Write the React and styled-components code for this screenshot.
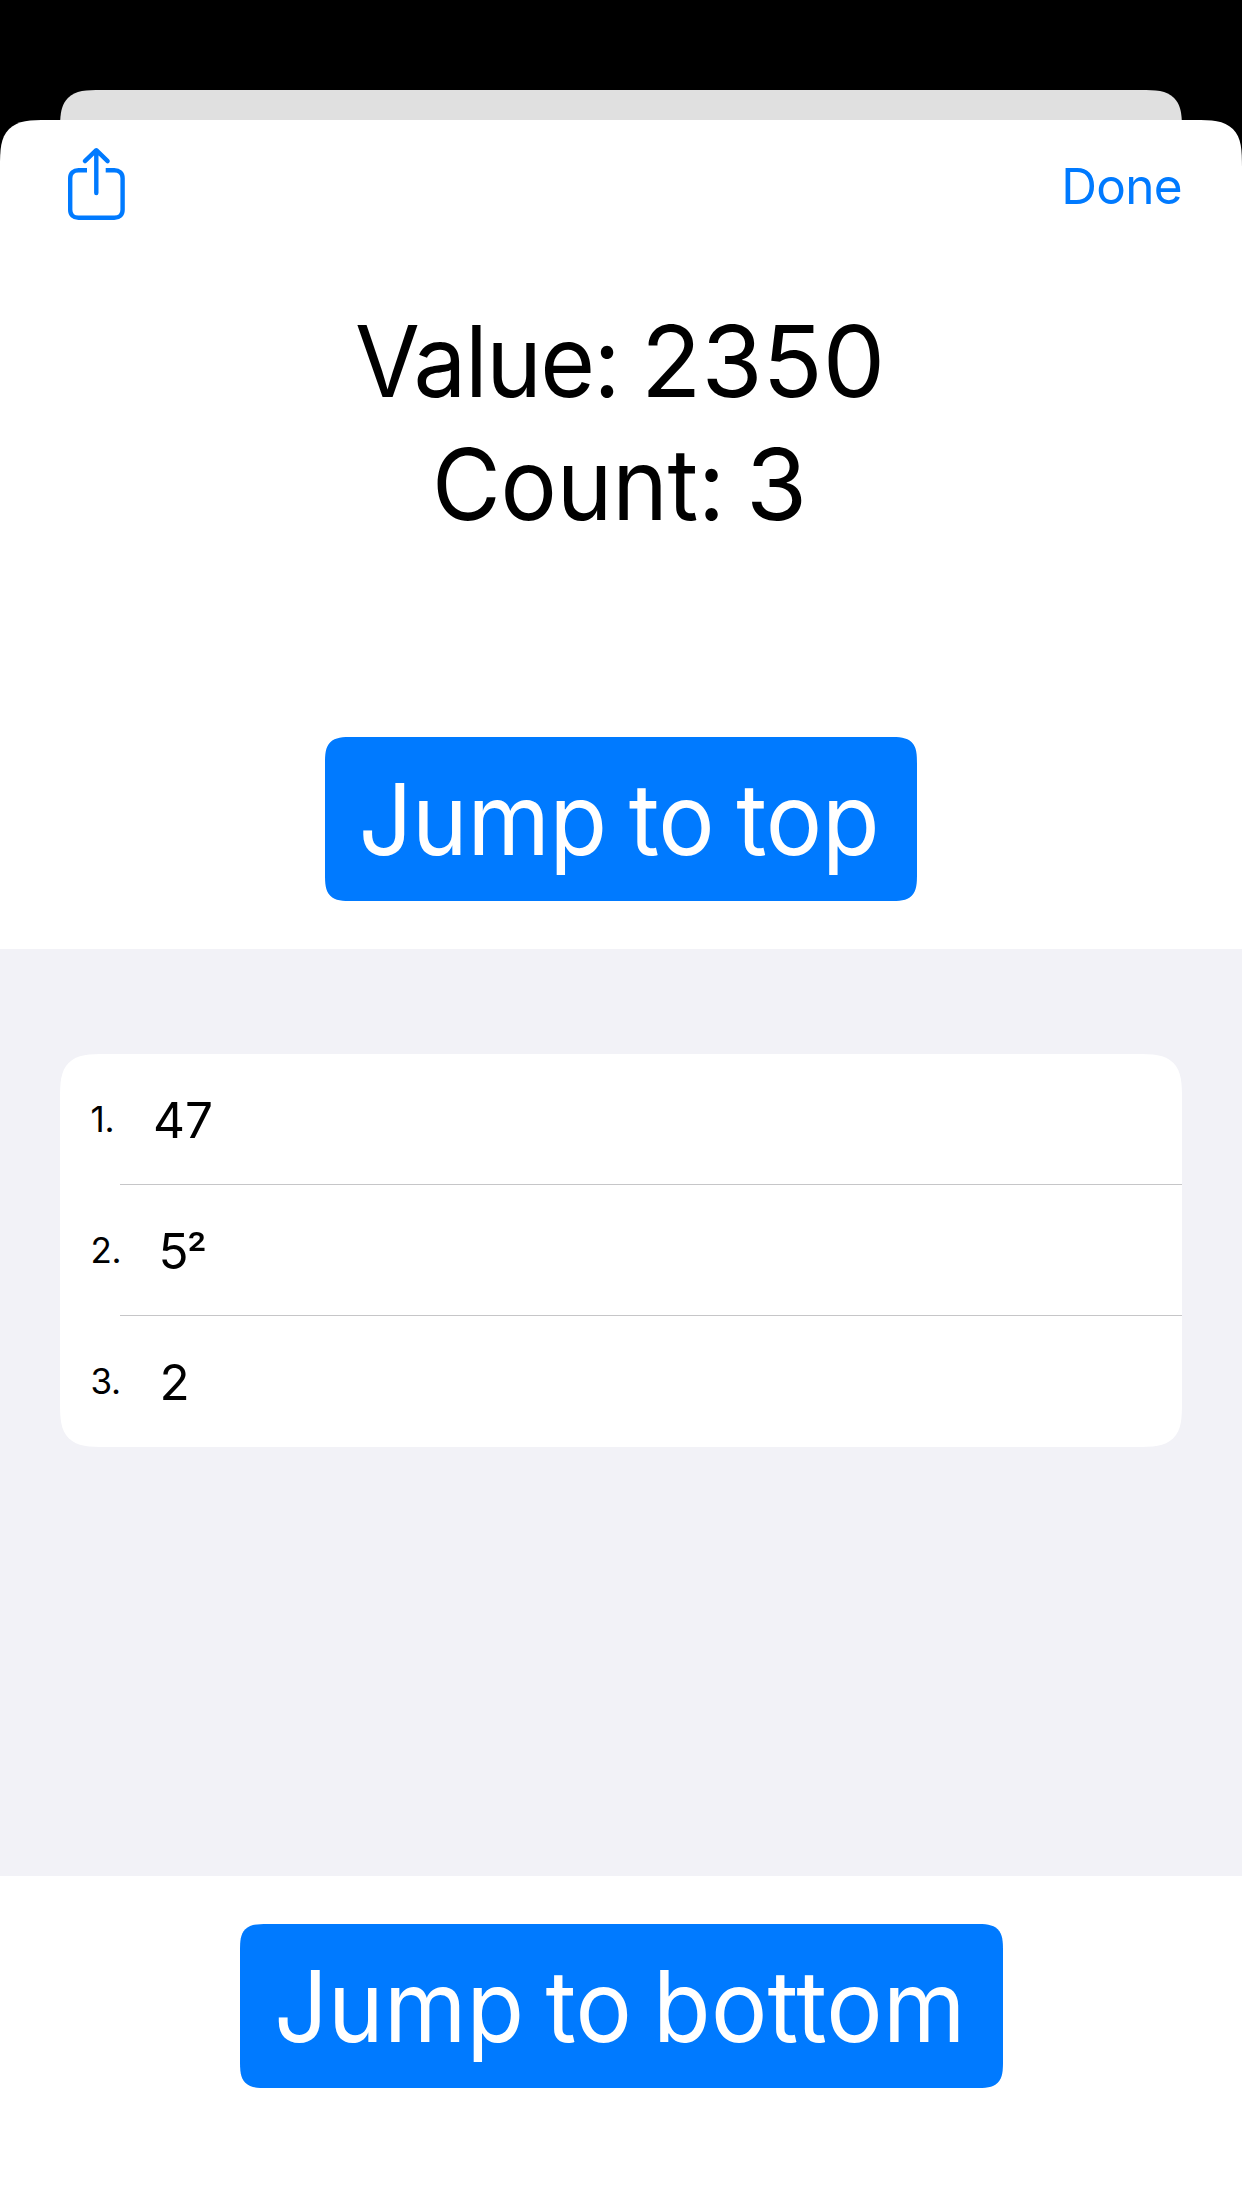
import React from "react";
import styled, { createGlobalStyle, css } from "styled-components";

const BLUE = "#007aff";

const GlobalStyle = createGlobalStyle`
  *, *::before, *::after { box-sizing: border-box; }
  body {
    margin: 0;
    background: #000;
    color: #000;
    font-family: Inter, Roboto, sans-serif;
  }
`;

const smoothCorner = (radius, sides = "all") => {
  const corners = (r) => (sides === "top" ? `${r}px ${r}px 0 0` : `${r}px`);
  return css`
    border-radius: ${corners(radius)};
    @supports (corner-shape: superellipse(1.7)) {
      border-radius: ${corners(radius * 1.528)};
      corner-shape: superellipse(1.7);
    }
  `;
};

const Screen = styled.div`
  display: flex;
  flex-direction: column;
  width: 1242px;
  height: 2208px;
  padding-top: 90px;
  overflow: hidden;
  background: #000;
`;

const SheetPeek = styled.div`
  flex: none;
  height: 30px;
  margin: 0 60px;
  overflow: hidden;

  &::before {
    content: "";
    display: block;
    height: 80px;
    background: #e0e0e0;
    ${smoothCorner(27, "top")}
  }
`;

const Sheet = styled.main`
  display: flex;
  flex: 1;
  flex-direction: column;
  background: #fff;
  ${smoothCorner(31, "top")}
`;

const Toolbar = styled.header`
  display: flex;
  align-items: center;
  justify-content: space-between;
  height: 132px;
  padding: 0 60px 0 66px;
`;

const PlainButton = styled.button`
  display: flex;
  padding: 0;
  border: 0;
  background: none;
  color: ${BLUE};
  font: 400 49.5px/60px Inter, Roboto, sans-serif;
  letter-spacing: -0.7px;
`;

const Summary = styled.section`
  display: flex;
  flex-direction: column;
  align-items: center;
  height: 437px;
  padding-top: 48px;
`;

const SummaryLine = styled.p`
  display: flex;
  width: ${(p) => p.$width}px;
  margin: 0;
  font-size: 99px;
  line-height: 123px;
  white-space: pre;
`;

const SummaryLabel = styled.span`
  flex: none;
  width: ${(p) => p.$width}px;
  letter-spacing: ${(p) => p.$tracking}px;
  transform: scaleX(0.95);
  transform-origin: left;
`;

const SummaryNumber = styled.span`
  letter-spacing: 0;
`;

const ActionBar = styled.div`
  display: flex;
  justify-content: center;
  padding: 48px 0;
`;

const JumpButton = styled.button`
  display: flex;
  justify-content: center;
  width: ${(p) => p.$width}px;
  height: 164px;
  padding: 0 ${(p) => p.$inset}px 0 0;
  border: 0;
  background: ${BLUE};
  color: #fff;
  font: 400 99px/164px Inter, Roboto, sans-serif;
  letter-spacing: ${(p) => p.$tracking}px;
  word-spacing: ${(p) => p.$wordSpacing}px;
  white-space: nowrap;
  ${smoothCorner(18)}
`;

const JumpLabel = styled.span`
  transform: scaleX(0.95);
`;

const ListArea = styled.section`
  height: 927px;
  padding: 105px 60px 0;
  background: #f2f2f7;
`;

const Card = styled.ol`
  margin: 0;
  padding: 0;
  list-style: none;
  background: #fff;
  ${smoothCorner(30)}
`;

const Row = styled.li`
  height: 131px;

  &:not(:last-child)::after {
    content: "";
    display: block;
    height: 1px;
    margin: -1px 0 0 60px;
    background: #c6c6c8;
  }
`;

const RowContent = styled.div`
  display: flex;
  align-items: center;
  gap: ${(p) => p.$gap}px;
  height: 131px;
  padding-left: 30.5px;
`;

const Index = styled.span`
  width: 30px;
  padding-bottom: 1px;
  font-size: 35px;
  line-height: 42px;
  letter-spacing: -0.3px;
`;

const Term = styled.span`
  font-size: 49.5px;
  line-height: 60px;
`;

const Exponent = styled.span`
  margin-left: -1px;
  font-family: Roboto, sans-serif;
  font-size: 51px;
  line-height: 0;
  vertical-align: 1px;
`;

const ShareIcon = () => (
  <svg width="62" height="80" viewBox="0 0 62 80" fill="none" stroke={BLUE} strokeWidth="4.4">
    <path d="M21 24.2H12.5C7.5 24.2 4.2 27.3 4.2 32.3V63.7C4.2 68.7 7.5 71.8 12.5 71.8H48.3C53.3 71.8 56.6 68.7 56.6 63.7V32.3C56.6 27.3 53.3 24.2 48.3 24.2H39.7" />
    <path d="M30.3 47V5M18.9 15.1L30.3 4.2L41.6 15.1" strokeLinecap="round" strokeLinejoin="round" />
  </svg>
);

const terms = [
  { value: "47", gap: 32.5 },
  { value: "5", exponent: "²", gap: 38 },
  { value: "2", gap: 39 },
];

export default function App() {
  return (
    <>
      <GlobalStyle />
      <Screen>
        <SheetPeek />
        <Sheet>
          <Toolbar>
            <PlainButton aria-label="Share">
              <ShareIcon />
            </PlainButton>
            <PlainButton>Done</PlainButton>
          </Toolbar>
          <Summary>
            <SummaryLine $width={532}>
              <SummaryLabel $width={286} $tracking={-1.6}>Value: </SummaryLabel>
              <SummaryNumber>2350</SummaryNumber>
            </SummaryLine>
            <SummaryLine $width={378}>
              <SummaryLabel $width={314} $tracking={-0.2}>Count: </SummaryLabel>
              <SummaryNumber>3</SummaryNumber>
            </SummaryLine>
          </Summary>
          <ActionBar>
            <JumpButton $width={592} $tracking={-0.3} $wordSpacing={-4.5} $inset={4}>
              <JumpLabel>Jump to top</JumpLabel>
            </JumpButton>
          </ActionBar>
          <ListArea>
            <Card>
              {terms.map((term, i) => (
                <Row key={term.value}>
                  <RowContent $gap={term.gap}>
                    <Index>{i + 1}.</Index>
                    <Term>
                      {term.value}
                      {term.exponent && <Exponent>{term.exponent}</Exponent>}
                    </Term>
                  </RowContent>
                </Row>
              ))}
            </Card>
          </ListArea>
          <ActionBar>
            <JumpButton $width={763} $tracking={0.25} $wordSpacing={-6} $inset={2}>
              <JumpLabel>Jump to bottom</JumpLabel>
            </JumpButton>
          </ActionBar>
        </Sheet>
      </Screen>
    </>
  );
}
